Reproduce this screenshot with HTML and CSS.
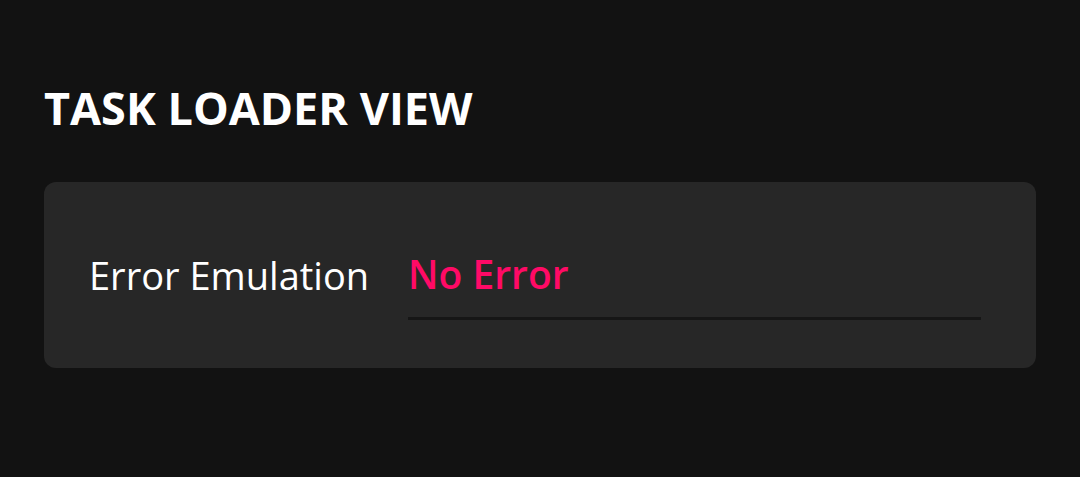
FILE: index.html
```html
<!DOCTYPE html>
<html>

<head>
    <meta charset='UTF-8'>
    <meta name='viewport' content='width=device-width, initial-scale=1.0'>
    <title>Task Loader View</title>
    <link rel="stylesheet" href="styles.css">
</head>

<body>
    <div class="page">
        <h1 class="title">TASK LOADER VIEW</h1>
        <div class="card">
            <div class="row">
                <span class="label">Error Emulation</span>
                <div class="select">
                    <span class="select-value">No Error</span>
                </div>
            </div>
        </div>
    </div>
</body>

</html>
```

FILE: styles.css
```css
/* 页面底色 */
body {
    margin: 0;
    background-color: #121212;
    font-family: "Open Sans", "Noto Sans", sans-serif;
    color: #ffffff;
}

.page {
    padding: 77px 44px 0 44px;
}

/* 标题 */
.title {
    margin: 0 0 43px 0;
    font-size: 45px;
    font-weight: 700;
    line-height: 62px;
}

/* 卡片 */
.card {
    background-color: #272727;
    border-radius: 12px;
    padding: 67px 55px 0 45px;
    height: 186px;
    box-sizing: border-box;
}

.row {
    display: flex;
    align-items: flex-start;
}

.label {
    font-size: 38px;
    line-height: 50px;
    margin-top: 1px;
    width: 319px;
}

/* 下拉选择 */
.select {
    flex: 1;
    border-bottom: 3px solid #161616;
    padding-bottom: 18px;
}

.select-value {
    display: block;
    font-size: 39px;
    font-weight: 600;
    line-height: 50px;
    color: #ff0a66;
}
```
